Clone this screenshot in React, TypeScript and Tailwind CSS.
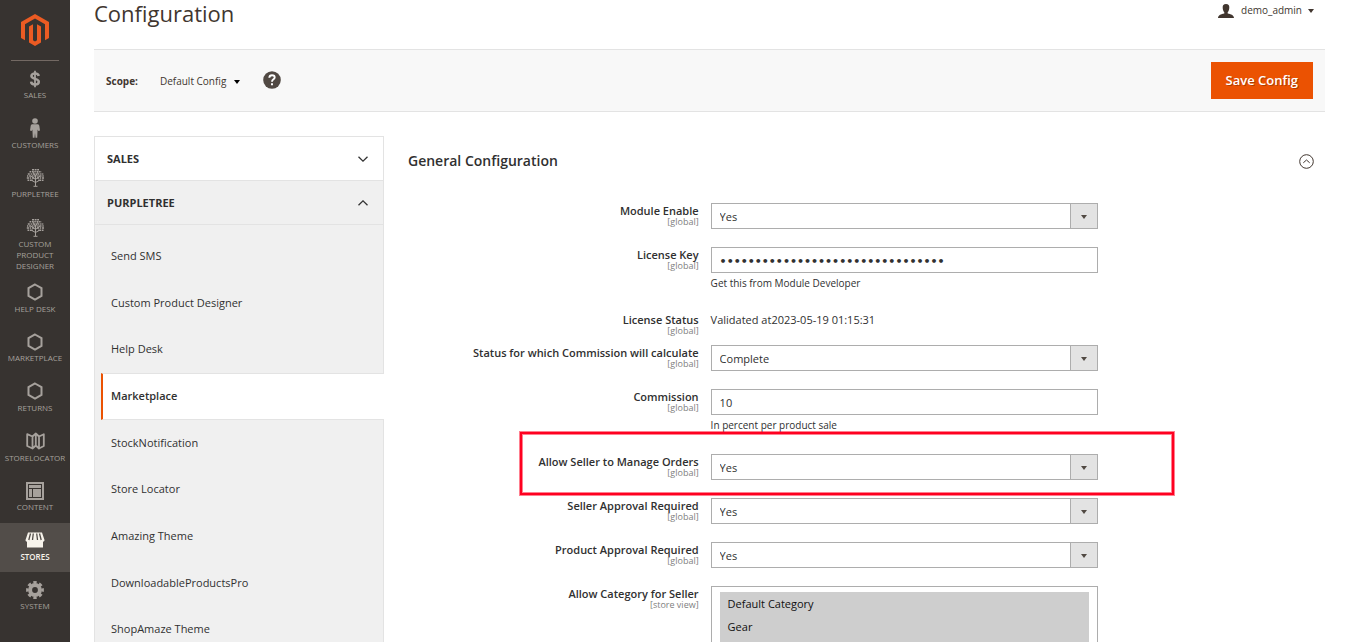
import type { ReactNode } from "react";

const HexIcon = () => (
  <svg className="h-[18px] w-[18px]" viewBox="0 0 18 18" fill="none" stroke="currentColor" strokeWidth="2">
    <path d="M9 1.500 15.500 5.200v7.600L9 16.500 2.500 12.800V5.200z" />
  </svg>
);

const TreeIcon = () => (
  <svg className="h-[19px] w-[19px]" viewBox="0 0 19 19" fill="none" stroke="currentColor">
    <path d="M9.500 18V7M9.500 14.500 5 12M9.500 14.500 14 12M9.500 11.500 5 8M9.500 11.500 14 8M9.500 8 7 4M9.500 8 12 4" strokeWidth="1" />
    <path d="M7.500 18.300h4" strokeWidth="1" />
    <path d="M6 1.800h7" strokeWidth="1.600" strokeDasharray="2 .6" />
    <path d="M3.500 3.800h12" strokeWidth="1.500" strokeDasharray="1.500 .7 2 .6" />
    <path d="M1.800 5.900h15.500" strokeWidth="1.500" strokeDasharray="2 .8 1.300 .7" />
    <path d="M1 8h17" strokeWidth="1.500" strokeDasharray="1.400 .7 2.200 .8" />
    <path d="M.8 10.100h17.400" strokeWidth="1.500" strokeDasharray="2.200 .7 1.300 .8" />
    <path d="M1.500 12.200h5.500M17.500 12.200H12" strokeWidth="1.500" strokeDasharray="1.700 .7" />
  </svg>
);

const menuItems: { label: string; icon: ReactNode }[] = [
  {
    label: "SALES",
    icon: (
      <svg className="h-[18px] w-[12px]" viewBox="0 0 12 18" fill="none" stroke="currentColor">
        <path d="M6 .8v16.400" strokeWidth="1.800" />
        <path d="M9.700 6C9.500 4.300 8.200 3.500 6 3.500S2.400 4.500 2.400 6.100C2.400 9.700 9.800 8 9.800 11.700 9.800 13.500 8.300 14.500 6 14.500S2.200 13.500 2.100 11.600" strokeWidth="2.500" />
      </svg>
    ),
  },
  {
    label: "CUSTOMERS",
    icon: (
      <svg className="h-[20px] w-[10px]" viewBox="0 0 10 20" fill="currentColor">
        <circle cx="5" cy="3" r="2.800" />
        <path d="M2.500 6.200h5c1 0 1.600.6 1.800 1.500l.7 4.800-1.600.6-.8-1.600-.4 8.200H5.500L5 15l-.5 4.700H2.800L2.400 11.500l-.8 1.600L0 12.500l.7-4.800c.2-.9.800-1.500 1.800-1.500z" />
      </svg>
    ),
  },
  { label: "PURPLETREE", icon: <TreeIcon /> },
  { label: "CUSTOM PRODUCT DESIGNER", icon: <TreeIcon /> },
  { label: "HELP DESK", icon: <HexIcon /> },
  { label: "MARKETPLACE", icon: <HexIcon /> },
  { label: "RETURNS", icon: <HexIcon /> },
  {
    label: "STORELOCATOR",
    icon: (
      <svg className="h-[18px] w-[19px]" viewBox="0 0 19 18" fill="none" stroke="currentColor" strokeWidth="1.800" strokeLinejoin="round">
        <path d="M1.200 2.200 6.500 4.500v12L1.200 14zM6.500 4.500 9.800 1.500v12L6.500 16.500M9.800 1.500 13 4.500v12l-3.200-3M13 4.500 17.800 2.200V14L13 16.500" />
      </svg>
    ),
  },
  {
    label: "CONTENT",
    icon: (
      <svg className="h-[18px] w-[18px]" viewBox="0 0 18 18" fill="currentColor">
        <path fillRule="evenodd" d="M0 0h18v18H0zM2 2v14h14V2z" />
        <path d="M3 3h12v3H3zM3 7h3v8H3zM7 7h8v8H7z" />
      </svg>
    ),
  },
  {
    label: "STORES",
    icon: (
      <svg className="h-[16px] w-[20px]" viewBox="0 0 20 16" fill="currentColor">
        <path d="M3 .5h14L19.500 8c0 1-.7 1.700-1.500 1.700V15.500H2V9.700C1.200 9.700.5 9 .5 8z" />
        <path d="M5.500 1.500 3.800 8M8.300 1.500 7.500 8M11.700 1.500l.8 6.500M14.500 1.500 16.200 8" stroke="#524d49" strokeWidth="1.300" />
      </svg>
    ),
  },
  {
    label: "SYSTEM",
    icon: (
      <svg className="h-[18px] w-[18px]" viewBox="0 0 18 18" fill="none" stroke="currentColor">
        <circle cx="9" cy="9" r="4.900" strokeWidth="4" />
        <circle cx="9" cy="9" r="7.600" strokeWidth="2.600" pathLength="48" strokeDasharray="3.400 2.600" strokeDashoffset="1.700" />
      </svg>
    ),
  },
];

const AdminMenu = () => (
  <aside className="flex w-[70px] shrink-0 flex-col bg-[#373330]">
    <a href="#dashboard" aria-label="Dashboard" className="mx-[11px] flex h-[61px] shrink-0 justify-center border-b border-[#736963] pt-[14px]">
      <svg className="h-[32px] w-[28px]" viewBox="0 0 28 32" fill="#eb5b23">
        <path d="M14 0 28 8v16l-4 2.300v-16L14 4.600 4 10.300v16L0 24V8z" />
        <path d="M8 12.600 12 10.300v15.900l2 1.200 2-1.200V10.300l4 2.300v15.900L14 32l-6-3.500z" />
      </svg>
    </a>
    <nav>
      <ul className="flex h-[561px] flex-col">
        {menuItems.map(({ label, icon }) => (
          <li
            key={label}
            className={
              label === "CUSTOM PRODUCT DESIGNER"
                ? "h-[65px] text-[#a6a19c]"
                : label === "STORES"
                  ? "flex-1 bg-[#524d49] font-semibold text-[#f7f3eb]"
                  : "flex-1 text-[#a6a19c]"
            }
          >
            <a href="#menu" className="flex flex-col items-center pt-[7px] text-center text-[8px] leading-[11px]">
              <span className="flex h-[21px] items-center">{icon}</span>
              <span className="max-w-[66px]">
                {label === "CUSTOM PRODUCT DESIGNER" ? <span className="block w-[44px]">{label}</span> : label}
              </span>
            </a>
          </li>
        ))}
      </ul>
    </nav>
  </aside>
);

const Caret = ({ className }: { className: string }) => (
  <svg className={className} viewBox="0 0 6 4" fill="currentColor">
    <path d="M0 0h6L3 4z" />
  </svg>
);

const Chevron = ({ up }: { up?: boolean }) => (
  <svg className="h-[6px] w-[10px]" viewBox="0 0 10 6" fill="none" stroke="#333" strokeWidth="1.300">
    <path d={up ? "M.5 5.300 5 .9l4.500 4.400" : "M.5.700 5 5.100 9.500.7"} />
  </svg>
);

const tabs = [
  "Send SMS",
  "Custom Product Designer",
  "Help Desk",
  "Marketplace",
  "StockNotification",
  "Store Locator",
  "Amazing Theme",
  "DownloadableProductsPro",
  "ShopAmaze Theme",
];

const ConfigTabs = () => (
  <div className="w-[290px] shrink-0 text-[11px] text-[#303030]">
    <button className="flex h-[45px] w-full items-center justify-between border border-[#e3e3e3] bg-white pr-[15px] pl-[12px] font-bold">
      <span className="pt-[2px]">SALES</span>
      <Chevron />
    </button>
    <button className="flex h-[44px] w-full items-center justify-between border-x border-b border-[#e3e3e3] bg-[#f0f0f0] pr-[15px] pl-[12px] font-bold">
      <span className="pt-[2px]">PURPLETREE</span>
      <Chevron up />
    </button>
    <ul className="grid h-[428px] grid-rows-9 border-x border-[#e3e3e3] bg-[#f0f0f0] pt-[8px]">
      {tabs.map((tab) =>
        tab === "Marketplace" ? (
          <li key={tab} className="-mr-px ml-[6px] border-y border-l-2 border-y-[#e3e3e3] border-l-[#eb5202] bg-white">
            <a href="#tab" className="flex h-full items-center pl-[8px] font-semibold">{tab}</a>
          </li>
        ) : (
          <li key={tab}>
            <a href="#tab" className="flex h-full items-center pl-[16px]">{tab}</a>
          </li>
        ),
      )}
    </ul>
  </div>
);

type FieldProps = {
  id: string;
  label: string;
  scope?: string;
  note?: string;
  className?: string;
  children: ReactNode;
};

const Field = ({ id, label, scope = "[global]", note, className = "mb-[18px]", children }: FieldProps) => (
  <div className={`grid grid-cols-[33%_44%_1fr] ${className}`}>
    <label htmlFor={id} className="pr-[12px] text-right text-[11px] leading-[16px] font-semibold">
      {label}
      <span className="-mt-[2px] block text-[9px] leading-[10px] font-normal text-[#808080]">{scope}</span>
    </label>
    <div className="pr-[16px] text-[11px]">
      {children}
      {note && <p className="mt-[3px] text-[10px] leading-[14px]">{note}</p>}
    </div>
  </div>
);

const Select = ({ id, value }: { id: string; value: string }) => (
  <div className="relative">
    <select id={id} className="block h-[26px] w-full appearance-none border border-[#adadad] bg-white px-[8px] pt-[3px]">
      <option>{value}</option>
    </select>
    <span className="pointer-events-none absolute inset-y-0 right-0 flex w-[28px] items-center justify-center border border-[#adadad] bg-[#e3e3e3] pt-px text-[#514943]">
      <Caret className="h-[4px] w-[6px]" />
    </span>
  </div>
);

const ConfigForm = () => (
  <main className="min-w-0 flex-1 text-[#303030]">
    <div className="flex h-[49px] items-center justify-between pr-[11px]">
      <h2 className="text-[14px] font-semibold">General Configuration</h2>
      <button aria-label="Collapse section" className="pt-[2px]">
        <svg className="h-[15px] w-[15px]" viewBox="0 0 15 15" fill="none" stroke="#41362f">
          <circle cx="7.500" cy="7.500" r="6.800" />
          <path d="M4.300 8.800 7.500 6l3.200 2.800" />
        </svg>
      </button>
    </div>
    <form className="pt-[18px]">
      <Field id="module" label="Module Enable">
        <Select id="module" value="Yes" />
      </Field>
      <Field id="license" label="License Key" note="Get this from Module Developer" className="mb-[22px]">
        <input
          id="license"
          type="password"
          defaultValue="abcdefghijklmnopqrstuvwxyz012345"
          className="block h-[26px] w-full border border-[#adadad] px-[8px] pt-[3px] font-['DejaVu_Sans'] font-bold"
        />
      </Field>
      <Field id="status" label="License Status" className="mb-[9px]">
        <output id="status" className="block leading-[16px]">Validated at2023-05-19 01:15:31</output>
      </Field>
      <Field id="order-status" label="Status for which Commission will calculate">
        <Select id="order-status" value="Complete" />
      </Field>
      <Field id="commission" label="Commission" note="In percent per product sale" className="mb-[22px]">
        <input id="commission" defaultValue="10" className="block h-[26px] w-full border border-[#adadad] px-[8px]" />
      </Field>
      <div className="relative">
        <Field id="manage-orders" label="Allow Seller to Manage Orders">
          <Select id="manage-orders" value="Yes" />
        </Field>
        <div className="pointer-events-none absolute -top-[22px] -bottom-[15px] left-[112px] w-[654px] border-2 border-[#ff0020] shadow-[0_0_0_1px_#ff002080,inset_0_0_0_1px_#ff002080]" />
      </div>
      <Field id="seller-approval" label="Seller Approval Required">
        <Select id="seller-approval" value="Yes" />
      </Field>
      <Field id="product-approval" label="Product Approval Required">
        <Select id="product-approval" value="Yes" />
      </Field>
      <Field id="category" label="Allow Category for Seller" scope="[store view]">
        <select
          id="category"
          multiple
          defaultValue={["Default Category", "Gear", "Bags", "Fitness Equipment"]}
          className="block h-[200px] w-full border border-[#adadad] px-[8px] py-[5px]"
        >
          {["Default Category", "Gear", "Bags", "Fitness Equipment"].map((name) => (
            <option key={name} className="h-[23px] px-[8px] py-[4px] leading-[15px]">{name}</option>
          ))}
        </select>
      </Field>
    </form>
  </main>
);

const App = () => {
  return (
    <div className="flex h-screen overflow-hidden bg-white font-['Open_Sans',sans-serif] text-[#41362f]">
      <AdminMenu />
      <div className="min-w-0 flex-1 px-[24px]">
        <header className="flex h-[49px] items-start justify-between pr-[11px]">
          <h1 className="text-[22px] leading-[26px]">Configuration</h1>
          <button className="flex h-[21px] items-center text-[10px]">
            <svg className="mr-[7px] h-[14px] w-[16px]" viewBox="0 0 16 14" fill="currentColor">
              <path d="M8 0c2.500 0 3.400 1.300 3.300 3.500 0 2.200-.7 3.800-1.600 4.700v1.200c3 .6 6.300 1.500 6.300 4.600H0c0-3.100 3.300-4 6.300-4.600V8.200C5.400 7.300 4.700 5.700 4.700 3.500 4.600 1.300 5.500 0 8 0z" />
            </svg>
            demo_admin
            <Caret className="ml-[6px] h-[4px] w-[6px]" />
          </button>
        </header>

        <div className="flex h-[63px] items-center border-y border-[#e3e3e3] bg-[#f8f8f8] px-[12px]">
          <span className="pt-[2px] text-[10px] font-bold">Scope:</span>
          <button className="ml-[22px] flex items-center pt-[2px] text-[10px]">
            Default Config
            <Caret className="ml-[8px] h-[4px] w-[6px] text-black" />
          </button>
          <a href="#help" aria-label="Help" className="ml-[23px] pb-[2px]">
            <svg className="h-[18px] w-[18px]" viewBox="0 0 18 18">
              <circle cx="9" cy="9" r="8.800" fill="#514943" />
              <path d="M6.300 6.800C6.400 5 7.500 4.200 9 4.200s2.700.9 2.700 2.300C11.700 8.400 9 8.400 9 10.800" fill="none" stroke="#fff" strokeWidth="1.900" />
              <path d="M8 12.300h2v2H8z" fill="#fff" />
            </svg>
          </a>
          <button className="ml-auto h-[37px] bg-[#eb5202] px-[15px] text-[13px] font-semibold text-white [text-shadow:1px_1px_0_rgba(0,0,0,0.25)]">
            Save Config
          </button>
        </div>

        <div className="flex gap-[24px] pt-[24px]">
          <ConfigTabs />
          <ConfigForm />
        </div>
      </div>
    </div>
  );
};

export default App;
